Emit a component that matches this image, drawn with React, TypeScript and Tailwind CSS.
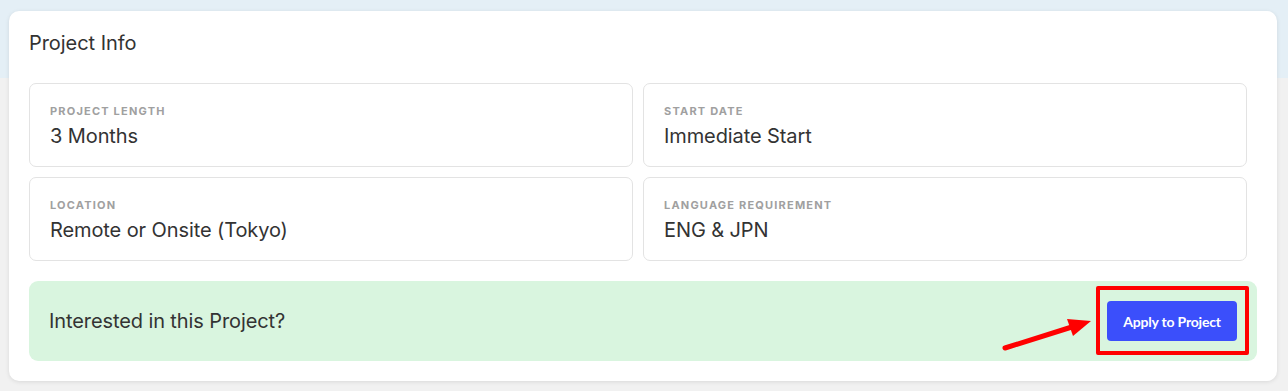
import React from "react";

const items = [
  { label: "PROJECT LENGTH", value: "3 Months" },
  { label: "START DATE", value: "Immediate Start" },
  { label: "LOCATION", value: "Remote or Onsite (Tokyo)" },
  { label: "LANGUAGE REQUIREMENT", value: "ENG & JPN" },
];

export default function App() {
  return (
    <div
      className="relative h-[391px] w-full bg-[linear-gradient(#e4eff6_0px,#e4eff6_78px,#f1f1f1_78px)] pl-[9px] pr-[11px] pt-[11px]"
      style={{ fontFamily: "Inter, 'Noto Sans', sans-serif" }}
    >
      <div className="rounded-[10px] bg-white p-5 shadow-[0_1px_4px_rgba(0,0,0,0.10)]">
        <h2 className="text-[20px] leading-[24px] font-normal text-[#333333] tracking-[-0.05px]">
          Project Info
        </h2>
        <div className="mt-[28px] grid grid-cols-2">
          {items.map((it) => (
            <div
              key={it.label}
              className="mr-[10px] mb-[10px] rounded-[7px] border border-[#e3e3e3] px-5 pt-5 pb-4"
            >
              <div className="text-[11px] leading-[14px] font-bold tracking-[1.2px] text-[#a0a0a0]">
                {it.label}
              </div>
              <div className="mt-[4px] text-[20px] leading-[28px] text-[#333333] tracking-[-0.1px]">
                {it.value}
              </div>
            </div>
          ))}
        </div>
        <div className="mt-[10px] flex h-[80px] items-center justify-between rounded-[9px] bg-[#d9f5df] pl-5 pr-5">
          <span className="text-[20px] leading-[28px] text-[#333333] tracking-[-0.1px]">
            Interested in this Project?
          </span>
          <div className="relative">
            <button
              className="h-[40px] w-[130px] rounded-[4px] bg-[#3b4ffb] text-[14px] font-bold text-white tracking-[-0.2px]"
              style={{ fontFamily: "Lato, 'Open Sans', sans-serif" }}
            >
              Apply to Project
            </button>
            <div className="pointer-events-none absolute left-[-11px] right-[-12px] top-[-15px] bottom-[-14px] rounded-[2px] border-[4px] border-[#ff0000]" />
          </div>
        </div>
      </div>
      <svg
        className="pointer-events-none absolute left-[995px] top-[305px]"
        width="110"
        height="55"
        viewBox="0 0 110 55"
      >
        <line x1="10" y1="43" x2="80" y2="21" stroke="#ff0000" strokeWidth="5" strokeLinecap="round" />
        <polygon points="96,16 72,14 78,31" fill="#ff0000" />
      </svg>
    </div>
  );
}
